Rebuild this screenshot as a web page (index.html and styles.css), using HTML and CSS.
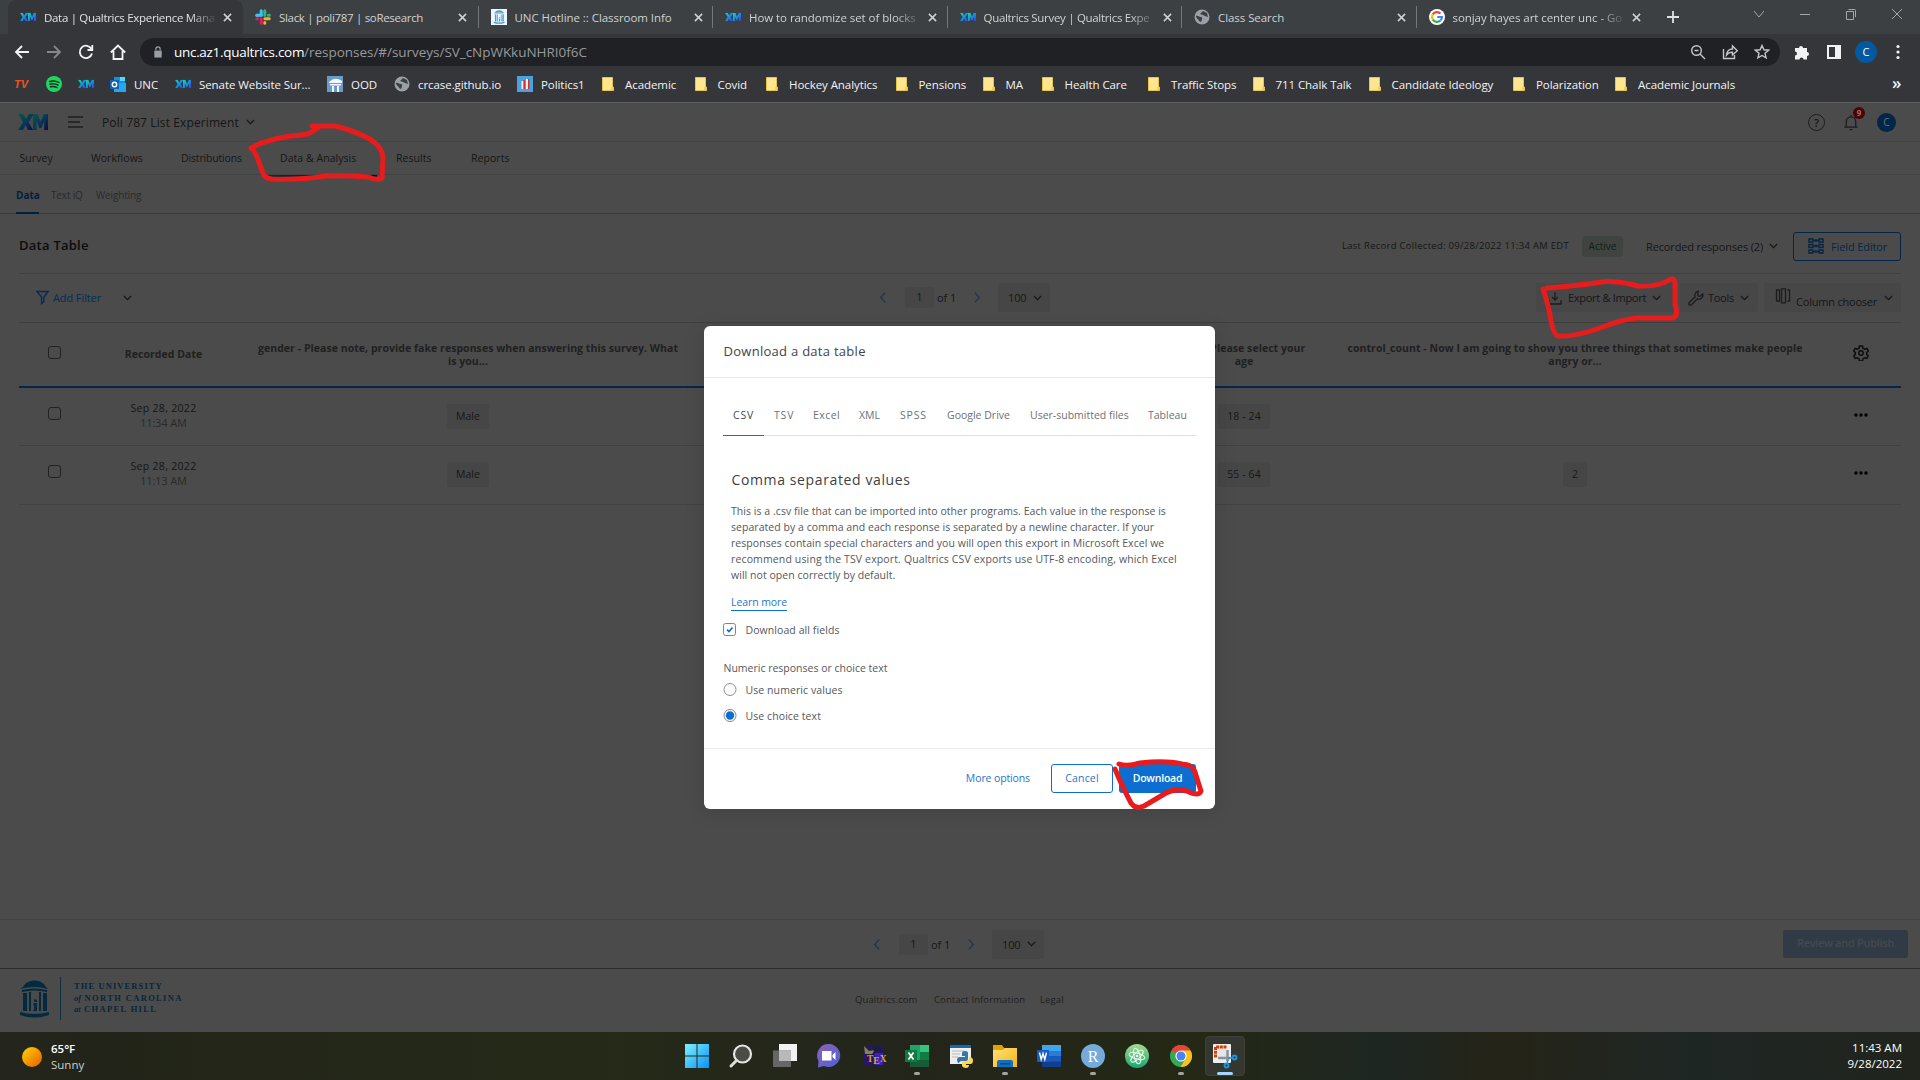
FILE: index.html
```html
<!DOCTYPE html>
<html lang="en">
<head>
<meta charset="utf-8">
<title>Data | Qualtrics Experience Management</title>
<link rel="stylesheet" href="styles.css">
</head>
<body>
<svg class="defs" width="0" height="0">
  <defs>
    <linearGradient id="xm" x1="0" y1="0" x2="1" y2="1"><stop offset="0" stop-color="#1fd6a8"/><stop offset=".5" stop-color="#0a95e8"/><stop offset="1" stop-color="#5a2be0"/></linearGradient>
    <linearGradient id="xmd" x1="0" y1="0" x2="1" y2="1"><stop offset="0" stop-color="#06574a"/><stop offset=".5" stop-color="#053a58"/><stop offset="1" stop-color="#12083f"/></linearGradient>
    <linearGradient id="win" x1="0" y1="0" x2="1" y2="1"><stop offset="0" stop-color="#7df0ff"/><stop offset="1" stop-color="#0a92f5"/></linearGradient>
    <linearGradient id="sun" x1="0" y1="0" x2="1" y2="1"><stop offset="0" stop-color="#ffd400"/><stop offset="1" stop-color="#e85d00"/></linearGradient>
    <linearGradient id="chat" x1="0" y1="0" x2="1" y2="1"><stop offset="0" stop-color="#8f62b8"/><stop offset="1" stop-color="#4d5fd6"/></linearGradient>
    <linearGradient id="fold" x1="0" y1="0" x2="1" y2="1"><stop offset="0" stop-color="#ffe07a"/><stop offset="1" stop-color="#f8b414"/></linearGradient>
    <linearGradient id="atom" x1="0" y1="0" x2="0" y2="1"><stop offset="0" stop-color="#a6dc8c"/><stop offset="1" stop-color="#14a873"/></linearGradient>
    <symbol id="i-xm" viewBox="0 0 30 16"><path d="M0 0h5l3 5 3-5h5l-5.500 8L15 16h-5l-2.500-5L5 16H0l5-8z"/><path d="M15 16V0h4.500l3 7.500L26 0h4v16h-3.800V7l-3 7h-1.800l-2.800-7v9z"/></symbol>
    <symbol id="i-x" viewBox="0 0 10 10"><path d="M1 1l8 8M9 1l-8 8" fill="none" stroke="currentColor" stroke-width="1.700"/></symbol>
    <symbol id="i-dn" viewBox="0 0 10 6"><path d="M1 .8l4 4 4-4" fill="none" stroke="currentColor" stroke-width="1.300"/></symbol>
    <symbol id="i-globe" viewBox="0 0 16 16"><circle cx="8" cy="8" r="7.500" fill="#9aa0a6"/><path d="M2 7c2-1 3 1 5 1s1 3 0 5l-2-1c0-2-3-2-3-5zM9 2l4 2 1 4-3-1-2-1-3-1z" fill="#3c4043"/></symbol>
    <symbol id="i-folder" viewBox="0 0 12 14"><path d="M.5.5h10v9.500h1v3.500H.5z" fill="#fee590" stroke="#eac34a"/><path d="M9 10h2v3H9z" fill="#f3cf58"/></symbol>
    <symbol id="i-well" viewBox="0 0 30 38"><path d="M4 7C8-1 22-2 27 7l2 2Q16 5 1 9zM3 10q12-3 25 0v2q-12-3-25 0zM4 13h4v18H4zM10 12h2v19h-2zM15 23h3v8h-4v-1h1v-5h-1zM15 19.500h3V22h-3zM20 12h2v19h-2zM24 13h4v18h-4zM1 32q14 4 29 0v3q-15 5-29 0z"/></symbol>
    <symbol id="i-lt" viewBox="0 0 8 14"><path d="M6.500 1.500L1.500 7l5 5.500" fill="none" stroke="currentColor" stroke-width="1.600"/></symbol>
    <symbol id="i-gt" viewBox="0 0 8 14"><path d="M1.500 1.500l5 5.500-5 5.500" fill="none" stroke="currentColor" stroke-width="1.600"/></symbol>
  </defs>
</svg>

<div class="tabstrip">
  <div class="tab active"><svg class="fav xm" viewBox="0 0 30 16"><use href="#i-xm"/></svg><span class="lbl fade snug">Data | Qualtrics Experience Mana</span><svg class="x"><use href="#i-x"/></svg></div>
  <div class="tab nosep"><svg class="fav" viewBox="0 0 16 16"><g stroke-width="3" stroke-linecap="round"><path d="M6.200 1.800v4.400M1.800 6.200h1" stroke="#36c5f0"/><path d="M2 6.200h4" stroke="#36c5f0"/><path d="M9.800 1.800v4.400M13.500 6.200h.8" stroke="#2eb67d"/><path d="M9.900 9.800h4.300M9.800 13.500v.8" stroke="#ecb22e"/><path d="M6.200 9.900v4.300M1.800 9.800h.8" stroke="#e01e5a"/></g></svg><span class="lbl snug">Slack | poli787 | soResearch</span><svg class="x"><use href="#i-x"/></svg></div>
  <div class="tab"><svg class="fav" viewBox="0 0 16 16"><path fill="#eef7fc" d="M0 0h16v16H0z"/><svg x="2" y="1" width="12" height="14" fill="#4b9cc9"><use href="#i-well"/></svg></svg><span class="lbl">UNC Hotline :: Classroom Info</span><svg class="x"><use href="#i-x"/></svg></div>
  <div class="tab"><svg class="fav xm" viewBox="0 0 30 16"><use href="#i-xm"/></svg><span class="lbl fade">How to randomize set of blocks</span><svg class="x"><use href="#i-x"/></svg></div>
  <div class="tab"><svg class="fav xm" viewBox="0 0 30 16"><use href="#i-xm"/></svg><span class="lbl fade snug">Qualtrics Survey | Qualtrics Expe</span><svg class="x"><use href="#i-x"/></svg></div>
  <div class="tab"><svg class="fav"><use href="#i-globe"/></svg><span class="lbl">Class Search</span><svg class="x"><use href="#i-x"/></svg></div>
  <div class="tab"><svg class="fav" viewBox="0 0 16 16"><circle cx="8" cy="8" r="8" fill="#fff"/><g fill="none" stroke-width="2.200"><path d="M11.500 4.500A5 5 0 0 0 3.700 5.500" stroke="#ea4335"/><path d="M3.700 5.500a5 5 0 0 0 0 5" stroke="#fbbc05"/><path d="M3.700 10.500a5 5 0 0 0 7.700 1" stroke="#34a853"/><path d="M11.400 11.500A5 5 0 0 0 13 8H8.300" stroke="#4285f4"/></g></svg><span class="lbl fade">sonjay hayes art center unc - Go</span><svg class="x"><use href="#i-x"/></svg></div>
  <svg class="plus" viewBox="0 0 14 14"><path d="M7 1v12M1 7h12" stroke="#dee1e6" stroke-width="1.800"/></svg>
  <div class="wincontrols">
    <svg viewBox="0 0 12 12"><path d="M1 3l5 6 5-6"/></svg>
    <svg viewBox="0 0 12 12"><path d="M1 6.500h10"/></svg>
    <svg viewBox="0 0 12 12"><path d="M1.500 3.500h7v8h-7zM3.500 1.500h6q1 0 1 1V9"/></svg>
    <svg viewBox="0 0 12 12"><path d="M1 1l10 10M11 1L1 11"/></svg>
  </div>
</div>

<div class="toolbar">
  <svg class="nav" viewBox="0 0 16 16"><path d="M15 8H2M8 2L2 8l6 6"/></svg>
  <svg class="nav off" viewBox="0 0 16 16"><path d="M1 8h13M8 2l6 6-6 6"/></svg>
  <svg class="nav" viewBox="0 0 16 16"><path d="M13.500 5A6.200 6.200 0 1 0 14 9.500M14.300 1v5H9.500"/></svg>
  <svg class="nav" viewBox="0 0 16 16"><path d="M3.500 7v8h9V7M.8 8.500L8 1.500l7.200 7"/></svg>
  <div class="omnibox">
    <svg class="lock" viewBox="0 0 10 13"><path d="M1 5h8v7.500H1z" fill="#9aa0a6"/><path d="M2.700 5V3.200a2.300 2.300 0 0 1 4.600 0V5" fill="none" stroke="#9aa0a6" stroke-width="1.300"/></svg>
    <span class="url"><b>unc.az1.qualtrics.com</b>/responses/#/surveys/SV_cNpWKkuNHRI0f6C</span>
    <svg class="oi" viewBox="0 0 16 16"><circle cx="6.500" cy="6.500" r="4.800"/><path d="M10 10l5 5M4.500 6.500h4"/></svg>
    <svg class="oi" viewBox="0 0 16 16"><path d="M1.500 5v9.500h11V11M4.500 11c.5-4 2.500-6 6-6V2l4.800 4.800L10.500 11V8.300c-3 0-4.500.7-6 2.700z"/></svg>
    <svg class="oi" viewBox="0 0 16 16"><path d="M8 1.500l1.900 4.300 4.700.4-3.600 3.100 1.100 4.600L8 11.500l-4.100 2.400L5 9.300 1.400 6.200l4.700-.4z"/></svg>
  </div>
  <div class="ext">
    <svg viewBox="0 0 16 16"><path fill="#f1f3f4" d="M1 4h4a2 2 0 1 1 4 0h4v4a2 2 0 1 1 0 4v3.500H9.500a2 2 0 0 0-4 0H1v-4a2 2 0 0 0 0-4z"/></svg>
    <svg viewBox="0 0 16 16"><path d="M2 2h12v12H2z" fill="none" stroke="#f1f3f4" stroke-width="2"/><path d="M9 2h5v12H9z" fill="#f1f3f4"/></svg>
    <span class="me">C</span>
    <svg viewBox="0 0 16 16" fill="#f1f3f4"><circle cx="8" cy="2.500" r="1.600"/><circle cx="8" cy="8" r="1.600"/><circle cx="8" cy="13.500" r="1.600"/></svg>
  </div>
</div>

<div class="bookmarks">
  <span class="tv">TV</span>
  <span><svg class="bi" viewBox="0 0 16 16"><circle cx="8" cy="8" r="8" fill="#1ed760"/><path d="M3.500 5.500q5-1.500 9.500 1M4 8.200q4.500-1.200 8 1M4.500 10.800q3.500-.8 6.500.8" fill="none" stroke="#1b2b20" stroke-width="1.400" stroke-linecap="round"/></svg></span>
  <span><svg class="bi xm" viewBox="0 0 30 16"><use href="#i-xm"/></svg></span>
  <span><svg class="bi" viewBox="0 0 16 16"><path fill="#1490df" d="M4 1h11v7H4z"/><path fill="#50d9ff" d="M10 1h5v4h-5z"/><path fill="#28a8ea" d="M4 7h12v9H4z"/><path fill="#0f64b8" d="M0 4h9v9H0z"/><circle cx="4.500" cy="8.500" r="2.200" fill="none" stroke="#fff" stroke-width="1.400"/></svg><em>UNC</em></span>
  <span><svg class="bi xm" viewBox="0 0 30 16"><use href="#i-xm"/></svg><em>Senate Website Sur...</em></span>
  <span><svg class="bi" viewBox="0 0 16 16"><path fill="#6c9bcb" d="M0 0h16v16H0z"/><path d="M2 6q6-6 13-1v2H2zM3 8h11v1.500H3zM5 10h2v6H5zM10 10h2v6h-2z" fill="#f3f8fd"/></svg><em>OOD</em></span>
  <span><svg class="bi"><use href="#i-globe"/></svg><em>crcase.github.io</em></span>
  <span><svg class="bi" viewBox="0 0 16 16"><path fill="#4aa3e0" d="M0 0h16v16H0z"/><path d="M4.500 5h2v8h-2zM9 3h2v10H9z" fill="#f4eef2"/><path d="M6.500 4h1.500v9H6.500zM11 3h1.500v10H11z" fill="#c33"/></svg><em>Politics1</em></span>
  <span class="f"><svg><use href="#i-folder"/></svg><em>Academic</em></span>
  <span class="f"><svg><use href="#i-folder"/></svg><em>Covid</em></span>
  <span class="f"><svg><use href="#i-folder"/></svg><em>Hockey Analytics</em></span>
  <span class="f"><svg><use href="#i-folder"/></svg><em>Pensions</em></span>
  <span class="f"><svg><use href="#i-folder"/></svg><em>MA</em></span>
  <span class="f"><svg><use href="#i-folder"/></svg><em>Health Care</em></span>
  <span class="f"><svg><use href="#i-folder"/></svg><em>Traffic Stops</em></span>
  <span class="f"><svg><use href="#i-folder"/></svg><em>711 Chalk Talk</em></span>
  <span class="f"><svg><use href="#i-folder"/></svg><em>Candidate Ideology</em></span>
  <span class="f"><svg><use href="#i-folder"/></svg><em>Polarization</em></span>
  <span class="f"><svg><use href="#i-folder"/></svg><em>Academic Journals</em></span>
  <span class="more">»</span>
</div>

<main class="page">
  <header class="head">
    <svg class="logo" viewBox="0 0 30 16" preserveAspectRatio="none"><use href="#i-xm"/></svg>
    <svg class="burger" viewBox="0 0 16 12"><path d="M0 1h15M0 6h12M0 11h15" stroke="#1f1f1f" stroke-width="1.400"/></svg>
    <span class="project">Poli 787 List Experiment</span><svg class="dn"><use href="#i-dn"/></svg>
    <div class="tools">
      <span class="help">?</span>
      <span class="bell"><svg viewBox="0 0 16 18"><path d="M1 14h14M3 14V8a5 5 0 0 1 10 0v6M8 1v2M6.500 16.500h3" fill="none" stroke="#1c1c1c" stroke-width="1.300"/></svg><i>9</i></span>
      <span class="user">C</span>
    </div>
  </header>
  <nav class="main-nav"><a>Survey</a><a>Workflows</a><a class="tight">Distributions</a><a class="on">Data &amp; Analysis</a><a>Results</a><a>Reports</a></nav>
  <nav class="sub-nav"><a class="on">Data</a><a class="tight">Text iQ</a><a class="tight">Weighting</a></nav>
  <section class="content">
    <div class="title-row">
      <h1>Data Table</h1>
      <span class="last">Last Record Collected: 09/28/2022 11:34 AM EDT</span>
      <span class="status">Active</span>
      <span class="rec"><em>Recorded responses (2)</em><svg class="dn"><use href="#i-dn"/></svg></span>
      <span class="field"><svg viewBox="0 0 16 16"><g fill="none" stroke="#042646" stroke-width="1.400"><path d="M1 1h4v3H1zM1 6.500h4v3H1zM1 12h4v3H1zM11 1h4v3h-4zM11 6.500h4v3h-4zM11 12h4v3h-4zM5 2.500h6M5 8h6M5 13.500h6M8 1v3M8 6.500v3M8 12v3"/></g></svg><em>Field Editor</em></span>
    </div>
    <div class="filter-row">
      <span class="add"><svg viewBox="0 0 14 15"><path d="M1 1h12L8.500 7v5L6 14V7z" fill="none" stroke="#042c54" stroke-width="1.500"/></svg><em>Add Filter</em><svg class="dn"><use href="#i-dn"/></svg></span>
      <div class="pager"><svg class="arr"><use href="#i-lt"/></svg><span class="num">1</span><span class="of">of 1</span><svg class="arr"><use href="#i-gt"/></svg><span class="size">100<svg class="dn"><use href="#i-dn"/></svg></span></div>
      <span class="btn exp"><svg viewBox="0 0 14 14"><path d="M7 1v8M4 6l3 3 3-3M1 9v4h12V9" fill="none" stroke="#1c1c1c" stroke-width="1.300"/></svg><em>Export &amp; Import</em><svg class="dn"><use href="#i-dn"/></svg></span>
      <span class="btn tls"><svg viewBox="0 0 16 16"><path d="M10.500 1.200a4 4 0 0 0-3.300 5.600L1.300 12.500a1.500 1.500 0 0 0 2.200 2.200l5.900-5.900a4 4 0 0 0 5.300-5l-2.600 2.500-2-.4-.4-2z" fill="none" stroke="#1c1c1c" stroke-width="1.300"/></svg><em>Tools</em><svg class="dn"><use href="#i-dn"/></svg></span>
      <span class="btn col"><svg viewBox="0 0 16 16"><path d="M4.500 2H1.500v11h3zM6.500 .8h4v14h-4zM12.500 2h2v11h-2" fill="none" stroke="#1c1c1c" stroke-width="1.300"/></svg><em>Column chooser</em><svg class="dn"><use href="#i-dn"/></svg></span>
    </div>
    <div class="row th">
      <i class="cb"></i><b>Recorded Date</b><b>gender - Please note, provide fake responses when answering this survey. What<br>is you...</b><i></i><b>age - Please select your<br>age</b><b>control_count - Now I am going to show you three things that sometimes make people<br>angry or...</b>
      <svg class="gear" viewBox="0 0 16 16"><path d="M6.500 1h3l.5 2.200 1.700 1 2.100-.7 1.500 2.600-1.600 1.400v1.900l1.600 1.400-1.500 2.600-2.100-.7-1.700 1-.5 2.300h-3L6 13.700l-1.700-1-2.100.7-1.500-2.600 1.600-1.400V7.500L.7 6.100l1.500-2.600 2.100.7 1.700-1z" fill="none" stroke="#0d0d0d" stroke-width="1.500"/><circle cx="8" cy="8" r="2.200" fill="none" stroke="#0d0d0d" stroke-width="1.400"/></svg>
    </div>
    <div class="row r1"><i class="cb"></i><span class="date">Sep 28, 2022<small>11:34 AM</small></span><span class="pill">Male</span><i></i><span class="pill">18 - 24</span><i></i><svg class="dots" viewBox="0 0 14 4"><circle cx="2" cy="2" r="1.700"/><circle cx="7" cy="2" r="1.700"/><circle cx="12" cy="2" r="1.700"/></svg></div>
    <div class="row r2"><i class="cb"></i><span class="date">Sep 28, 2022<small>11:13 AM</small></span><span class="pill">Male</span><i></i><span class="pill">55 - 64</span><span class="pill">2</span><svg class="dots" viewBox="0 0 14 4"><circle cx="2" cy="2" r="1.700"/><circle cx="7" cy="2" r="1.700"/><circle cx="12" cy="2" r="1.700"/></svg></div>
  </section>
  <div class="bottom-bar">
    <div class="pager"><svg class="arr"><use href="#i-lt"/></svg><span class="num">1</span><span class="of">of 1</span><svg class="arr"><use href="#i-gt"/></svg><span class="size">100<svg class="dn"><use href="#i-dn"/></svg></span></div>
    <span class="publish">Review and Publish</span>
  </div>
  <footer class="foot">
    <svg class="well" fill="#032a3e"><use href="#i-well"/></svg>
    <div class="unc"><div>THE UNIVERSITY</div><div><i>of</i> NORTH CAROLINA</div><div><i>at</i> CHAPEL HILL</div></div>
    <div class="links"><a>Qualtrics.com</a><a>Contact Information</a><a>Legal</a></div>
  </footer>
</main>

<div class="taskbar">
  <div class="weather"><svg viewBox="0 0 20 20"><circle cx="10" cy="10" r="10" fill="url(#sun)"/></svg><div><b>65°F</b><span>Sunny</span></div></div>
  <div class="apps">
    <span><svg viewBox="0 0 24 24"><path fill="url(#win)" d="M0 0h11.500v11.500H0zM12.500 0H24v11.500H12.500zM0 12.500h11.500V24H0zM12.500 12.500H24V24H12.500z"/></svg></span>
    <span><svg viewBox="0 0 24 24"><circle cx="13.500" cy="10" r="8.500" fill="#4a4c45" stroke="#e6e6e6" stroke-width="2.200"/><path d="M7.500 16.500L2 22" stroke="#ddd" stroke-width="3" stroke-linecap="round"/></svg></span>
    <span><svg viewBox="0 0 24 24"><path fill="#f2f2f2" d="M6 0h18v17H6z"/><path fill="#666" d="M0 6.500h18V23H0z"/><path fill="#b9b9b9" d="M6 6.500h12V17H6z"/></svg></span>
    <span><svg viewBox="0 0 24 24"><path fill="url(#chat)" d="M12 0a11.500 11.500 0 1 1-5 22L1 23.500 1.500 17A11.500 11.500 0 0 1 12 0z"/><path fill="#fff" d="M5 7h9.500v9.500H5zM15.500 11l3-3v8l-3-3z"/></svg></span>
    <span><svg viewBox="0 0 24 24"><path fill="#2a1560" d="M2 1h20v20H2z"/><path fill="#3b22b5" d="M14 9h8v12h-8z"/><path d="M3 2l5 5 6-1-3 4H4z" fill="#7d8f35"/><path d="M11 2h9v5l-7 1z" fill="#1a1c45"/><text x="6" y="18" font-family="Liberation Serif, serif" font-size="9.500" font-weight="700" fill="#d8a33c">T<tspan dy="2">E</tspan><tspan dy="-2">X</tspan></text></svg></span>
    <span class="run"><svg viewBox="0 0 24 24"><path fill="#21a366" d="M5 1h19v22H5z"/><path fill="#33c481" d="M15 1h9v7h-9z"/><path fill="#107c41" d="M15 8h9v8h-9z"/><path fill="#185c37" d="M5 16h19v7H5z"/><path fill="#0f7a41" d="M0 6h12v12H0z"/><path d="M3.500 8.500l5 7M8.500 8.500l-5 7" stroke="#fff" stroke-width="1.800"/></svg></span>
    <span><svg viewBox="0 0 24 24"><path fill="#eee" d="M1 1h21v19H1z"/><path fill="#0c6bb5" d="M1 1h21v3H1z"/><path stroke="#bbb" d="M3 7h13M3 10h8M3 13h6"/><path fill="#3a74a8" d="M13 9q0-2 3-2t3 2v6q0 2-2 2h-4q-3 0-3 2.500Q8 19 8 16t3-3h5v-1h-3z"/><path fill="#ffd94a" d="M20 13q4 0 4 3.500T21 20h-4v1h3q0 3-3 3t-4-2v-3q0-2 2-2h3q2 0 2-2z"/></svg></span>
    <span class="run"><svg viewBox="0 0 24 24"><path fill="#e5a100" d="M0 1h9l2 3h6v4H0z"/><path fill="url(#fold)" d="M0 6h10l2-2h12v19H0z"/><path fill="#0f6fc0" d="M4 18q0-2 2-2h12q2 0 2 2v5H4z"/><path fill="#0a4a86" d="M7 19h10v1.500H7z"/></svg></span>
    <span><svg viewBox="0 0 24 24"><path fill="#41a5ee" d="M5 1h19v6H5z"/><path fill="#2b7cd3" d="M5 7h19v6H5z"/><path fill="#185abd" d="M5 12h19v6H5z"/><path fill="#103f91" d="M5 17.500h19V23H5z"/><path fill="#185abd" d="M0 6h12v12H0z"/><path d="M2.500 8.500l1.700 7L6 9.500l1.800 6 1.700-7" fill="none" stroke="#fff" stroke-width="1.400"/></svg></span>
    <span class="run"><svg viewBox="0 0 24 24"><circle cx="12" cy="12" r="12" fill="#75aadb"/><text x="12" y="17.500" text-anchor="middle" font-family="Liberation Serif, serif" font-size="16" fill="#fff">R</text></svg></span>
    <span><svg viewBox="0 0 24 24"><circle cx="12" cy="12" r="12" fill="url(#atom)"/><g fill="none" stroke="#e4f6ea" stroke-width="1.100"><ellipse cx="12" cy="12" rx="3" ry="8" transform="rotate(-15 12 12)"/><ellipse cx="12" cy="12" rx="3" ry="8" transform="rotate(45 12 12)"/><ellipse cx="12" cy="12" rx="3" ry="8" transform="rotate(105 12 12)"/></g><circle cx="12" cy="12" r="1.300" fill="#fff"/></svg></span>
    <span class="run"><svg viewBox="0 0 24 24"><circle cx="12" cy="12" r="11" fill="#34a853"/><path d="M12 12L2.500 6.500A11 11 0 0 1 21.500 6.500z" fill="#ea4335"/><path d="M12 6.500h9.500A11 11 0 0 1 11.500 23L17 14z" fill="#fbc116"/><circle cx="12" cy="12" r="5.600" fill="#fff"/><circle cx="12" cy="12" r="4.500" fill="#4285f4"/></svg></span>
    <span class="cur"><svg viewBox="0 0 24 24"><rect width="18" height="19" rx="1" fill="#eee"/><path d="M2.500 13.500V3h11.500" fill="none" stroke="#d83b01" stroke-width="3" stroke-dasharray="3 .7"/><path d="M5.500 5h8v8.500h-8z" fill="#e3e6e9"/><path d="M5 14h12M14.500 6v11" fill="none" stroke="#8b929c" stroke-width="2.500"/><path d="M15 14l4 0M14.500 16v4" stroke="#1597e5" stroke-width="1.500"/><circle cx="21.500" cy="13.500" r="2" fill="none" stroke="#1597e5" stroke-width="1.800"/><circle cx="13.500" cy="21.500" r="2" fill="none" stroke="#1597e5" stroke-width="1.800"/></svg></span>
  </div>
  <div class="clock"><span>11:43 AM</span><span>9/28/2022</span></div>
</div>

<div class="modal">
  <h2>Download a data table</h2>
  <div class="formats"><a class="on wide">CSV</a><a class="wide">TSV</a><a class="half">Excel</a><a>XML</a><a class="wide">SPSS</a><a>Google Drive</a><a>User-submitted files</a><a>Tableau</a></div>
  <h3>Comma separated values</h3>
  <p>This is a .csv file that can be imported into other programs. Each value in the response is<br>separated by a comma and each response is separated by a newline character. If your<br>responses contain special characters and you will open this export in Microsoft Excel we<br><span class="loose">recommend using the TSV export. Qualtrics CSV exports use UTF-8 encoding, which Excel</span><br>will not open correctly by default.</p>
  <a class="learn">Learn more</a>
  <div class="opt all"><svg viewBox="0 0 14 14"><rect x=".5" y=".5" width="12" height="12" rx="2" fill="#fff" stroke="#7e858c"/><path d="M4 6.700l2 1.800 3.500-4" fill="none" stroke="#0b6ed0" stroke-width="1.600"/></svg><em>Download all fields</em></div>
  <div class="group">Numeric responses or choice text</div>
  <div class="opt"><svg viewBox="0 0 14 14"><circle cx="7" cy="6.500" r="6" fill="#fff" stroke="#8a9097"/></svg><em>Use numeric values</em></div>
  <div class="opt last-opt"><svg viewBox="0 0 14 14"><circle cx="7" cy="6.500" r="6" fill="#fff" stroke="#7d848c"/><circle cx="7" cy="6.500" r="4.200" fill="#0b6ed0"/></svg><em>Use choice text</em></div>
  <div class="actions"><a class="opts">More options</a><a class="cancel">Cancel</a><a class="download">Download</a></div>
</div>

<svg class="marks" viewBox="0 0 1920 1080">
  <path d="M312 126H335Q352 130 366 137Q382 145 383 158L382 178Q378 181 368 177Q345 175 325 176Q300 180 272 179Q264 178 263 173L258 160Q255 151 251 148Q262 141 290 136Q306 135 310 133L318 128"/>
  <path d="M1547 288Q1585 285 1605 281.500Q1620 281 1638 286Q1658 287 1669 280Q1675 277 1675 284V305Q1679 315 1673 318Q1650 318 1636 318Q1620 320 1600 328Q1575 337 1558 336Q1553 335 1550 315Q1547 300 1543 289"/>
  <path d="M1119 764Q1127 767 1140 763Q1165 760 1182 764Q1192 764 1195 772Q1198 782 1201 791Q1199 797 1187 791Q1175 788 1166 793L1144 806Q1136 810 1131 803Q1121 784 1115 769"/>
</svg>
</body>
</html>
```
FILE: styles.css
```css
* { box-sizing: border-box; }
body { margin: 0; width: 1920px; height: 1080px; overflow: hidden; position: relative; display: flex; flex-direction: column; background: #4b4b4b; font-family: "Open Sans", "Noto Sans", sans-serif; font-size: 11px; color: #161616; }
em, i { font-style: normal; }
span, em, a, b { white-space: nowrap; }
svg { flex: none; display: block; }
.defs { position: absolute; }
.xm { fill: url(#xm); }

.tabstrip { height: 34px; flex: none; background: #3c4043; display: flex; padding-left: 8px; }
.tab { width: 234.5px; height: 34px; display: flex; align-items: center; padding-left: 12px; position: relative; color: #ced1d5; font-size: 11.5px; letter-spacing: -.06px; }
.tab.active { width: 235px; background: #35363a; border-radius: 8px 8px 0 0; color: #dfe1e5; }
.tab + .tab:not(.nosep) { border-left: 1px solid #73777b; border-image: linear-gradient(transparent 20%, #73777b 20% 80%, transparent 80%) 1; }
.fav { width: 16px; height: 16px; }
.lbl { width: 172px; margin-left: 8px; overflow: hidden; }
.snug { letter-spacing: -.31px; }
.fade { mask-image: linear-gradient(90deg, #000 85%, transparent 101%); }
.x { width: 9px; height: 9px; margin-left: 7px; color: #ced1d5; }
.plus { width: 14px; height: 14px; margin: 10px 0 0 16px; }
.wincontrols { margin: 8px 17px 0 auto; display: flex; gap: 34px; }
.wincontrols svg { width: 12px; height: 12px; fill: none; stroke: #a4a7aa; }

.toolbar { height: 34px; flex: none; background: #35363a; display: flex; align-items: center; padding: 2px 0 0 14px; }
.nav { width: 16px; height: 16px; margin-right: 16px; fill: none; stroke: #f1f3f4; stroke-width: 1.8; }
.nav.off { stroke: #85888c; }
.omnibox { width: 1640px; height: 28px; margin-left: -2px; margin-top: 0; border-radius: 14px; background: #202124; display: flex; align-items: center; padding: 0 10px 0 13px; }
.lock { width: 10px; height: 12px; }
.url { font-size: 13.5px; color: #969a9e; margin: 0 auto 0 11px; letter-spacing: -.03px; }
.url b { font-weight: 400; color: #fff; letter-spacing: -.3px; }
.oi { width: 16px; height: 16px; margin-left: 16px; fill: none; stroke: #c4c7ca; stroke-width: 1.4; }
.ext { display: flex; align-items: center; margin-left: 14px; }
.ext svg { width: 16px; height: 16px; }
.ext svg:nth-child(2) { margin: 0 13px 0 16px; }
.me { width: 22px; height: 22px; border-radius: 50%; background: #0359a0; color: #fff; text-align: center; line-height: 22px; font-size: 11px; margin-right: 13px; }

.bookmarks { height: 35px; flex: none; background: #35363a; border-bottom: 1px solid #5d5e62; display: grid; grid-template-columns: 32px 32px 32px 65px 152px 67px 123px 85px 92.5px 71.5px 129.5px 87px 59px 106.500px 104.500px 116px 144.500px 102px 276px auto; align-items: center; padding: 0 0 2px 14px; color: #f2f3f4; font-size: 11.5px; letter-spacing: -.07px; }
.bookmarks > span { display: flex; align-items: center; }
.bi { width: 16px; height: 16px; }
.bookmarks em { margin-left: 8px; }
.f svg { width: 12px; height: 14px; }
.f em { margin-left: 11px; }
.bookmarks .tv { color: #f2501e; font: italic 700 11px "Liberation Sans", sans-serif; }
.bookmarks .more { font-size: 17px; font-weight: 600; padding: 0 0 3px 1px; }

.page { flex: 1; display: flex; flex-direction: column; min-height: 0; }
.head { height: 39px; flex: none; border-bottom: 1px solid #434343; display: flex; align-items: center; padding-left: 18px; }
.logo { width: 30px; height: 16px; fill: url(#xmd); }
.burger { width: 16px; height: 12px; margin: 0 18px 0 20px; }
.project { font-size: 12px; letter-spacing: .11px; width: 137px; margin-right: 7px; }
.dn { width: 9px; height: 6px; color: #161616; }
.tools { margin-left: auto; display: flex; align-items: center; padding-right: 24px; }
.help { width: 17px; height: 17px; border: 1px solid #1c1c1c; border-radius: 50%; text-align: center; line-height: 15px; font-weight: 600; }
.bell { position: relative; margin: 0 18px; }
.bell svg { width: 16px; height: 17px; }
.bell i { position: absolute; left: 10px; top: -7px; width: 12px; height: 12px; border-radius: 50%; background: #4c0306; color: #8b7577; font-size: 8px; font-weight: 700; line-height: 12px; text-align: center; }
.user { width: 19px; height: 19px; border-radius: 50%; background: #02264a; color: #68717b; text-align: center; line-height: 18px; font-size: 10px; }
.main-nav { height: 33px; flex: none; border-bottom: 1px solid #434343; display: grid; grid-template-columns: 71.500px 90px 99px 116px 75px 60px; padding-left: 19.500px; line-height: 33px; font-size: 10.500px; letter-spacing: .05px; }
.tight { letter-spacing: -.16px; }
.main-nav .on { margin-left: -14px; padding-left: 14px; margin-right: 19px; border-bottom: 2px solid; border-image: linear-gradient(90deg, #04333b, #0a0a30) 1; }
.sub-nav { height: 39px; flex: none; border-bottom: 1px solid #393939; display: grid; grid-template-columns: 23px 45px 60px; padding-left: 16px; line-height: 41px; font-size: 10px; color: #2a2a2a; }
.sub-nav .on { color: #031f3e; font-weight: 700; border-bottom: 2px solid #031f3e; height: 39px; }
.sub-nav a + a { padding-left: 12px; }

.content { margin: 0 19px; height: 705px; flex: none; }
.title-row { height: 60px; border-bottom: 1px solid #414141; display: flex; align-items: center; padding-top: 5px; }
.title-row h1 { font-size: 13px; font-weight: 600; letter-spacing: .25px; margin: 0 auto 2px 0; color: #0c0c0c; }
.last { font-size: 9.5px; letter-spacing: .28px; margin-right: 13px; margin-bottom: 1px; width: 227px; }
.status { width: 41px; height: 21px; border-radius: 3px; background: #404441; color: #0e2016; font-size: 10px; line-height: 20px; text-align: center; margin-right: 23px; }
.rec { display: flex; align-items: center; width: 147px; }
.rec em { width: 117px; margin-right: 6px; letter-spacing: -.14px; }
.field { width: 108px; height: 29px; border: 1px solid #03254a; border-radius: 3px; color: #04264a; display: flex; align-items: center; letter-spacing: -.12px; }
.field svg { width: 16px; height: 16px; margin: 0 7px 0 14px; }
.filter-row { height: 49px; border-bottom: 1px solid #3e3e3e; display: flex; align-items: center; padding-bottom: 1px; }
.add { width: 860px; padding-left: 17px; display: flex; align-items: center; color: #042c54; letter-spacing: -.1px; }
.add svg:first-child { width: 13px; height: 15px; margin-right: 4px; }
.add em { width: 48px; margin-right: 22px; }
.pager { display: flex; align-items: center; }
.arr { width: 8px; height: 13px; color: #283747; }
.num { width: 29px; height: 21px; background: #464646; border-radius: 3px; line-height: 20px; text-align: center; margin: 0 3px 0 18px; }
.of { width: 36px; letter-spacing: -.1px; }
.size { width: 52px; height: 29px; margin-left: 17px; background: #464646; border-radius: 3px; display: flex; align-items: center; justify-content: space-between; padding: 0 8px 0 10px; letter-spacing: -.15px; }
.btn { height: 29px; background: #474747; border-radius: 3px; display: flex; align-items: center; letter-spacing: -.29px; }
.exp { width: 141px; margin: 0 3px 0 auto; padding-left: 12px; }
.exp svg:first-child { width: 14px; height: 14px; }
.exp em { width: 78px; margin: 0 6px; }
.tls { width: 78px; margin-right: 6px; padding-left: 8px; }
.tls svg:first-child { width: 16px; height: 16px; }
.tls em { width: 26px; margin: 0 6px 0 4px; }
.col { width: 137px; padding-left: 11px; letter-spacing: -.21px; }
.col svg:first-child { width: 16px; height: 16px; margin-top: -3px; }
.col em { width: 82px; margin: 7px 6px 0 5px; }
.row { display: grid; grid-template-columns: 71px 147px 462px 470px 150px 512px 59px; align-items: center; height: 59px; border-bottom: 1px solid #414141; padding-bottom: 2px; }
.row > * { justify-self: center; }
.cb { width: 13px; height: 13px; border: 1px solid #222; border-radius: 3px; }
.th { height: 65px; border-bottom: 2px solid #02274a; text-align: center; line-height: 13px; font-size: 10.500px; letter-spacing: .05px; color: #202020; padding-bottom: 0; }
.th b { font-weight: 700; }
.th .cb { margin-bottom: 4px; }
.gear { width: 16px; height: 16px; margin-bottom: 4px; }
.r1 { height: 58px; padding-bottom: 1px; }
.date { text-align: center; line-height: 15.500px; font-size: 10.500px; letter-spacing: .3px; }
.date small { display: block; font-size: 10.500px; letter-spacing: .1px; color: #292929; }
.pill { background: #464646; height: 25px; line-height: 25px; padding: 0 9px; border-radius: 3px; font-size: 10.500px; letter-spacing: .1px; }
.row:not(.th) .cb { margin-bottom: 5px; }
.dots { width: 14px; height: 4px; margin-bottom: 2px; }
.bottom-bar { height: 50px; flex: none; border-top: 1px solid #414141; border-bottom: 1px solid #2c2c2c; display: flex; align-items: center; justify-content: space-between; padding: 0 12px 0 873px; }
.publish { width: 125px; height: 28px; background: #303b46; color: #47494b; border-radius: 3px; line-height: 26px; text-align: center; font-weight: 600; letter-spacing: -.32px; }
.foot { flex: 1; display: flex; align-items: flex-start; padding-left: 19px; }
.well { width: 30px; height: 38px; margin: 11px 11px 0 0; }
.unc { height: 43px; margin-top: 8px; border-left: 1px solid #0b3040; padding: 4px 0 0 13px; font: 700 8.5px/11.500px "Liberation Serif", serif; letter-spacing: 1.35px; color: #05283a; width: 795px; white-space: nowrap; }
.unc div:first-child { letter-spacing: 1.1px; }
.unc i { font-style: italic; letter-spacing: 0; }
.links { display: grid; grid-template-columns: 79px 106px 30px; font-size: 9.500px; letter-spacing: .1px; line-height: 14px; padding-top: 24px; color: #202020; }

.taskbar { height: 48px; flex: none; background: linear-gradient(90deg, #24261d, #222419 5%, #252a18 30%, #23251b 48%, #242814 62%, #1d2622 72%, #252418 78%, #1e2624 88%, #20241d); display: flex; align-items: center; justify-content: space-between; color: #fff; font-size: 11.500px; }
.weather { width: 676.500px; flex: none; padding: 1px 0 0 22px; display: flex; align-items: center; line-height: 16px; }
.weather svg { width: 20px; height: 20px; margin-right: 9px; }
.weather b, .weather span, .clock span { display: block; font-weight: 400; }
.weather b { font-weight: 600; }
.weather span { color: #ccc; }
.apps { display: flex; flex: 1; }
.apps > span { width: 40px; height: 40px; margin-right: 4px; border-radius: 4px; display: flex; align-items: center; justify-content: center; position: relative; }
.apps svg { width: 24px; height: 24px; overflow: visible; }
.apps .run::after, .apps .cur::after { content: ""; position: absolute; bottom: 1px; left: 17px; width: 6px; height: 3px; border-radius: 2px; background: #a5a5a0; }
.apps .cur { background: #34372f; border: 1px solid #3d4038; }
.apps .cur::after { left: 11px; width: 16px; bottom: 0; background: #a4d4ff; }
.clock { text-align: right; padding-right: 18px; line-height: 16px; }

.modal { position: absolute; left: 704px; top: 326px; width: 511px; height: 483px; border-radius: 6px; background: #fff; color: #54585d; display: flex; flex-direction: column; box-shadow: 0 3px 20px rgba(0,0,0,.12); }
.modal h2 { margin: 0; height: 52px; flex: none; border-bottom: 1px solid #e8e9ea; padding-left: 19.500px; font-size: 13px; letter-spacing: .28px; font-weight: 400; line-height: 50px; color: #404549; }
.formats { margin: 17px 19px 0; height: 41px; flex: none; border-bottom: 1px solid #dfe1e3; display: grid; grid-template-columns: 41px 39px 46px 41px 47px 83px 118px 50px; line-height: 40px; padding-left: 0; color: #6d7175; font-size: 10.500px; }
.formats a { padding-left: 10px; }
.formats .on { border-bottom: 1px solid #0b6ed0; height: 41px; color: #45494d; }
.wide { letter-spacing: .8px; }
.half { letter-spacing: .45px; }
.modal h3 { margin: 32px 0 0 27.500px; font-size: 14px; letter-spacing: .62px; font-weight: 400; line-height: 24px; color: #3d4145; }
.modal p { margin: 11px 0 0 27px; line-height: 16px; font-size: 10.500px; letter-spacing: .045px; }
.loose { letter-spacing: .14px; }
.learn { align-self: flex-start; margin: 12px 0 0 27px; line-height: 15px; color: #1f75cd; border-bottom: 1px solid #0b6ed0; font-size: 10.500px; letter-spacing: -.08px; }
.opt { display: flex; align-items: center; height: 16px; margin: 9px 0 0 19px; font-size: 10.500px; letter-spacing: .08px; }
.opt.all { margin-top: 11px; }
.opt svg { width: 14px; height: 14px; margin-right: 8.500px; }
.group { margin: 22px 0 0 19.500px; line-height: 16px; font-size: 10.500px; }
.group + .opt { margin-top: 5.500px; }
.last-opt { margin-top: 10.500px; }
.actions { margin-top: auto; height: 61px; border-top: 1px solid #e8e9ea; display: flex; justify-content: flex-end; align-items: center; padding: 0 19px 2px 0; font-size: 10.500px; color: #1f75cd; }
.opts { letter-spacing: -.12px; }
.cancel { width: 62px; height: 29px; margin: 0 6px 0 21px; border: 1px solid #0b6ed0; border-radius: 3px; line-height: 26px; text-align: center; letter-spacing: .2px; }
.download { width: 77px; height: 29px; background: #0b6ed0; border-radius: 3px; color: #fff; font-weight: 600; line-height: 28px; text-align: center; letter-spacing: -.2px; }
.marks { position: absolute; left: 0; top: 0; width: 1920px; height: 1080px; fill: none; stroke: #e81c1c; stroke-width: 5; stroke-linecap: round; stroke-linejoin: round; }
```
